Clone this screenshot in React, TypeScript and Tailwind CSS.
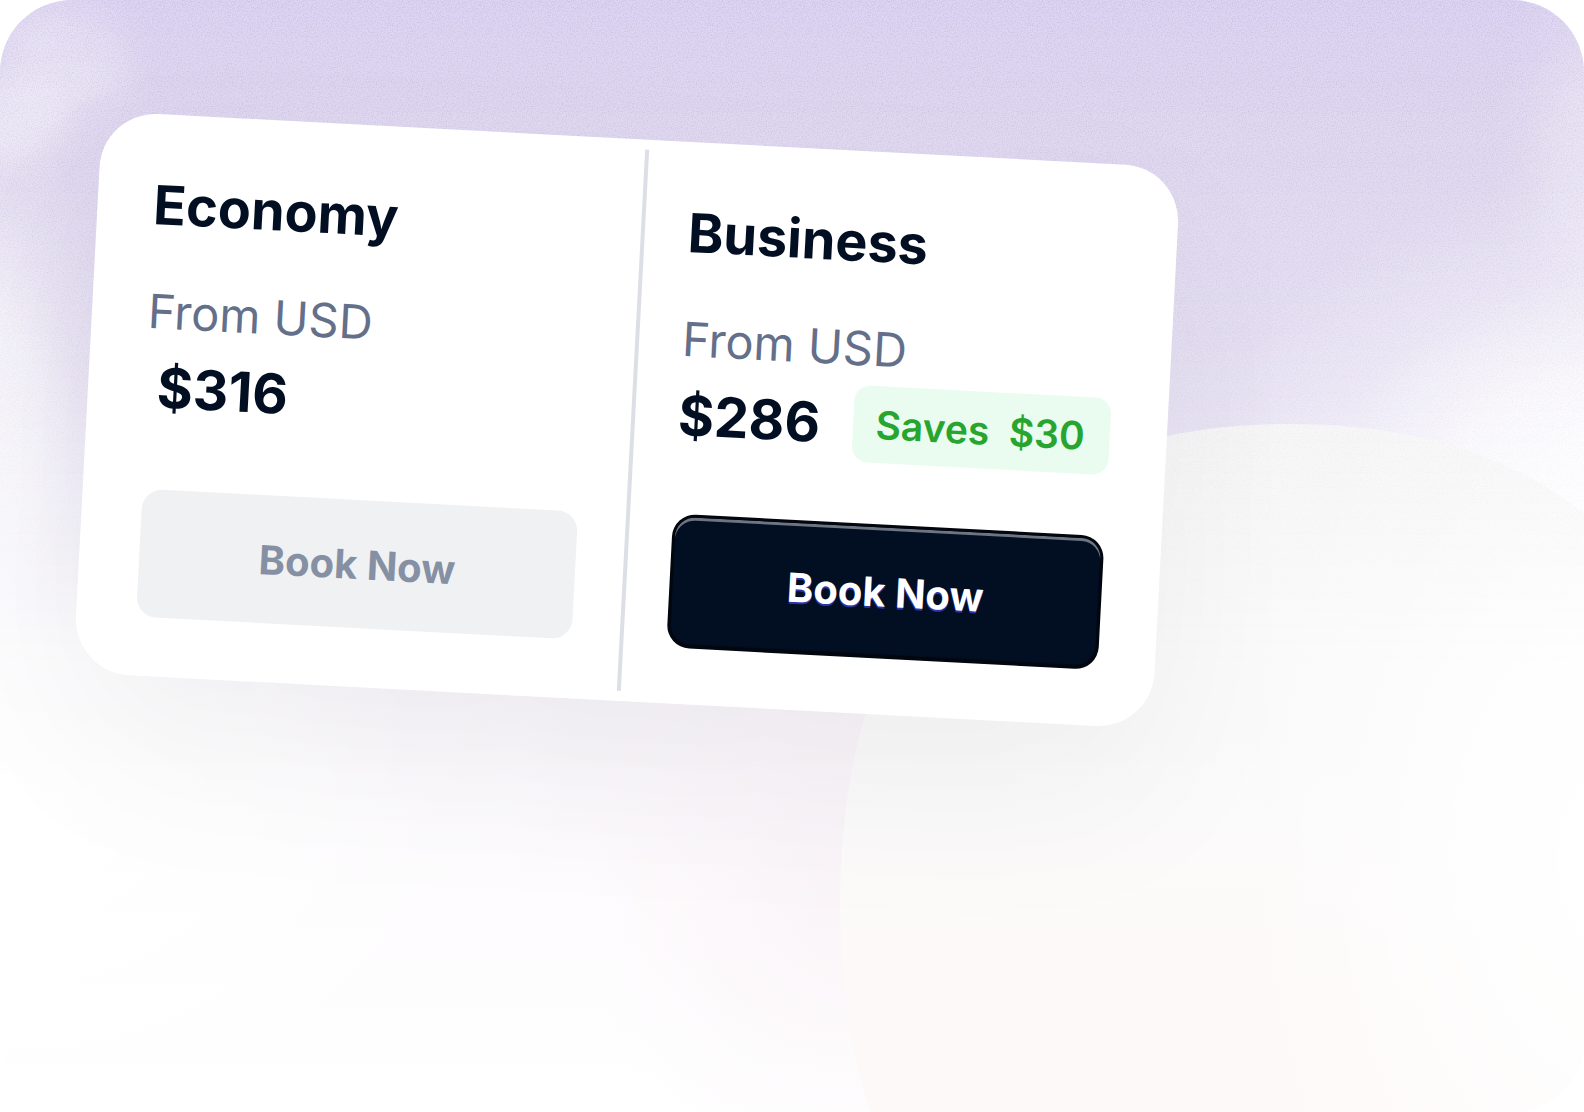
import React from "react";
import clsx from "clsx";

interface FareProps {
  title: string;
  price: string;
  saving?: string;
  primary?: boolean;
  className?: string;
}

const Fare: React.FC<FareProps> = ({
  title,
  price,
  saving,
  primary,
  className,
}) => {
  return (
    <section className={clsx("flex flex-col pt-[57px] pb-[59px]", className)}>
      <h2 className="text-[54px] leading-[68px] font-bold">{title}</h2>
      <p className="mt-[43px] text-[47px] leading-[58px] text-[#64708a]">
        From USD
      </p>
      <div className="mt-2 flex h-[77px] items-center justify-between">
        <span className="text-[55px] leading-[68px] font-bold whitespace-pre">
          {price}
        </span>
        {saving && (
          <span className="rounded-2xl bg-[#eafcef] py-3.5 pr-[25px] pl-[23px] text-[39px] leading-[49px] font-semibold whitespace-pre text-[#27a52f]">
            {saving}
          </span>
        )}
      </div>
      <button
        type="button"
        className={clsx(
          "mt-16 h-32 rounded-[20px] text-[40px] leading-[49px] font-bold",
          primary
            ? "mx-[3px] bg-[#020f22] text-white shadow-[0_0_0_3px_#02060d,inset_0_3px_0_#6d7583,inset_0_-1px_1px_#02060d] [text-shadow:0_2px_0_#2a35a8]"
            : "ml-1 bg-[#f0f1f3] text-[#8690a4]"
        )}
      >
        Book Now
      </button>
    </section>
  );
};

const Backdrop: React.FC = () => {
  return (
    <svg
      aria-hidden="true"
      className="absolute inset-0 h-full w-full"
      viewBox="0 0 1584 1112"
      preserveAspectRatio="none"
    >
      <defs>
        <linearGradient id="sky" x1="0" y1="0" x2="0" y2="1">
          <stop offset="0" stopColor="#d8cff0" />
          <stop offset="0.1" stopColor="#dcd4ee" />
          <stop offset="0.3" stopColor="#e4def2" />
          <stop offset="0.45" stopColor="#edeaf7" />
          <stop offset="0.65" stopColor="#f9f6fb" />
          <stop offset="0.8" stopColor="#fefcfe" />
          <stop offset="1" stopColor="#ffffff" />
        </linearGradient>
        <linearGradient id="disc" x1="0" y1="0" x2="0" y2="1">
          <stop offset="0" stopColor="#f7f7f7" />
          <stop offset="0.2" stopColor="#fafafa" />
          <stop offset="0.45" stopColor="#fcfafa" />
          <stop offset="0.6" stopColor="#fdf9f8" />
          <stop offset="1" stopColor="#fdf9f8" />
        </linearGradient>
        <radialGradient id="glow">
          <stop offset="0" stopColor="#fff" stopOpacity="1" />
          <stop offset="0.4" stopColor="#fff" stopOpacity="0.75" />
          <stop offset="0.7" stopColor="#fff" stopOpacity="0.25" />
          <stop offset="1" stopColor="#fff" stopOpacity="0" />
        </radialGradient>
        <radialGradient id="blush">
          <stop offset="0" stopColor="#f3e6ed" stopOpacity="0.35" />
          <stop offset="1" stopColor="#f3e6ed" stopOpacity="0" />
        </radialGradient>
        <linearGradient id="fade" x1="0" y1="0" x2="0" y2="1">
          <stop offset="0" stopColor="#fff" />
          <stop offset="0.25" stopColor="#fff" stopOpacity="0.7" />
          <stop offset="0.6" stopColor="#fff" stopOpacity="0" />
        </linearGradient>
        <mask id="grainMask">
          <rect width="1584" height="1112" fill="url(#fade)" />
        </mask>
        <filter id="soft" x="-50%" y="-50%" width="200%" height="200%">
          <feGaussianBlur stdDeviation="16" />
        </filter>
        <filter
          id="grain"
          x="0"
          y="0"
          width="100%"
          height="100%"
          colorInterpolationFilters="sRGB"
        >
          <feTurbulence type="fractalNoise" baseFrequency="0.8" numOctaves="2" />
          <feColorMatrix
            type="matrix"
            values="1.2 0 0 0 0.28
                    1.2 0 0 0 0.25
                    1.2 0 0 0 0.34
                    0 0 0 0 1"
          />
        </filter>
      </defs>

      <rect width="1584" height="1112" fill="url(#sky)" />

      {/* clouds */}
      <g filter="url(#soft)" fill="#fff">
        <ellipse cx="62" cy="58" rx="66" ry="54" opacity="0.22" />
        <ellipse cx="84" cy="80" rx="44" ry="22" opacity="0.15" />
        <ellipse cx="10" cy="120" rx="60" ry="42" opacity="0.4" />
        <ellipse cx="40" cy="42" rx="24" ry="12" opacity="0.3" />
      </g>
      <ellipse cx="-20" cy="440" rx="140" ry="340" fill="url(#glow)" opacity="0.8" />
      <ellipse cx="1620" cy="500" rx="420" ry="330" fill="url(#glow)" />
      <ellipse
        cx="1600"
        cy="160"
        rx="110"
        ry="220"
        fill="url(#glow)"
        opacity="0.35"
      />
      <ellipse cx="0" cy="820" rx="620" ry="420" fill="url(#glow)" />
      <ellipse cx="840" cy="900" rx="260" ry="280" fill="url(#blush)" />

      <path
        d="M840 905C840 597 1002 424 1290 424S1740 597 1740 905 1578 1386 1290 1386 840 1213 840 905Z"
        fill="url(#disc)"
      />
      <ellipse cx="1620" cy="860" rx="400" ry="600" fill="url(#glow)" />

      <g mask="url(#grainMask)">
        <rect
          width="1584"
          height="1112"
          filter="url(#grain)"
          opacity="0.14"
        />
      </g>
    </svg>
  );
};

const App: React.FC = () => {
  return (
    <div className="min-h-screen bg-white font-['Inter',sans-serif]">
      <main className="relative min-h-screen overflow-hidden rounded-[72px] px-[87px] pt-[139px]">
        <Backdrop />
        <div className="relative grid w-full max-w-[1080px] rotate-3 grid-cols-[544px_4px_1fr] rounded-[56px] bg-white text-[#020f22] shadow-[0_70px_180px_rgba(0,0,0,0.05)]">
          <Fare title="Economy" price=" $316" className="pr-12 pl-14" />
          <div className="my-2.5 bg-[#dcdfe6]" />
          <Fare
            title="Business"
            price="$286"
            saving="Saves  $30"
            primary
            className="pr-[57px] pl-[43px]"
          />
        </div>
      </main>
    </div>
  );
};

export default App;
